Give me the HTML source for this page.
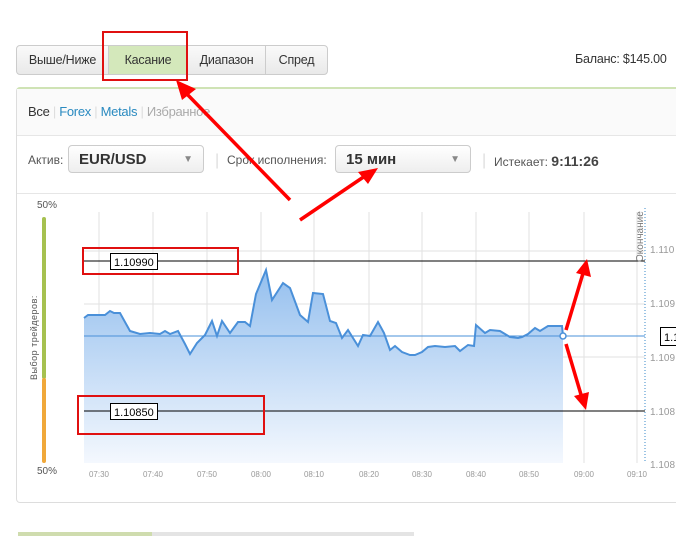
<!DOCTYPE html>
<html><head><meta charset="utf-8"><style>
body{margin:0;width:676px;height:536px;background:#fff;font-family:"Liberation Sans",sans-serif;position:relative;overflow:hidden;color:#333}
.a{position:absolute}
.tabs{left:16px;top:45px;height:28px;border:1px solid #ccc;border-radius:4px;display:flex;background:linear-gradient(#fafafa,#e9e9e9);overflow:hidden}
.tabs div{font-size:12.5px;line-height:28px;text-align:center;box-sizing:border-box;border-right:1px solid #ccc;white-space:nowrap;letter-spacing:-0.2px}
.tabs div:last-child{border-right:0}
.panel{left:16px;top:87px;width:680px;height:413px;border:1px solid #ddd;border-top:2px solid #cfe3b5;border-radius:4px}
.sel{height:28px;border:1px solid #ccc;border-radius:4px;background:linear-gradient(#fff,#eee);font-weight:bold;font-size:15px;line-height:28px;padding-left:10px;box-sizing:border-box}
.sel span{position:absolute;right:10px;font-size:10px;color:#888;font-weight:normal}
.sm{font-size:12px;color:#555}
</style></head><body>
<div class="a tabs"><div style="width:92px">Выше/Ниже</div><div style="width:79px;background:#d4e8bb">Касание</div><div style="width:78px">Диапазон</div><div style="width:61px">Спред</div></div>
<div class="a" style="left:575px;top:52px;font-size:12.5px;letter-spacing:-0.2px">Баланс: $145.00</div>
<div class="a panel"></div>
<div class="a" style="left:17px;top:89px;width:660px;height:46px;background:#fafafa;border-bottom:1px solid #e6e6e6"></div>
<div class="a" style="left:28px;top:104px;font-size:13px;letter-spacing:-0.3px">Все <span style="color:#ddd">|</span> <span style="color:#2a8ac0">Forex</span> <span style="color:#ddd">|</span> <span style="color:#2a8ac0">Metals</span> <span style="color:#ddd">|</span> <span style="color:#aaa">Избранное</span></div>
<div class="a" style="left:17px;top:193px;width:660px;border-top:1px solid #e6e6e6"></div>
<div class="a sm" style="left:28px;top:153px">Актив:</div>
<div class="a sel" style="left:68px;top:145px;width:136px">EUR/USD<span>▼</span></div>
<div class="a" style="left:215px;top:152px;color:#ddd">|</div>
<div class="a sm" style="left:227px;top:153px">Срок исполнения:</div>
<div class="a sel" style="left:335px;top:145px;width:136px">15 мин<span>▼</span></div>
<div class="a" style="left:482px;top:152px;color:#ddd">|</div>
<div class="a sm" style="left:494px;top:153px">Истекает: <b style="font-size:14px;color:#444">9:11:26</b></div>
<svg class="a" style="left:0;top:0" width="676" height="536" font-family="Liberation Sans" >
<defs><linearGradient id="g" x1="0" y1="0" x2="0" y2="1"><stop offset="0" stop-color="#94bfee"/><stop offset="1" stop-color="#f4f8fe"/></linearGradient></defs>
<text x="37" y="208" font-size="10" fill="#555">50%</text>
<text x="37" y="474" font-size="10" fill="#555">50%</text>
<rect x="42" y="217" width="4" height="162" rx="2" fill="#a6c150"/>
<rect x="42" y="378" width="4" height="85" rx="2" fill="#f0a83a"/>
<text transform="translate(37,380) rotate(-90)" font-size="9" fill="#555" letter-spacing="0.5">Выбор трейдеров:</text>
<g stroke="#e2e2e2" stroke-width="1">
<line x1="99" y1="212" x2="99" y2="463"/><line x1="153" y1="212" x2="153" y2="463"/><line x1="207" y1="212" x2="207" y2="463"/><line x1="261" y1="212" x2="261" y2="463"/><line x1="314" y1="212" x2="314" y2="463"/><line x1="369" y1="212" x2="369" y2="463"/><line x1="422" y1="212" x2="422" y2="463"/><line x1="476" y1="212" x2="476" y2="463"/><line x1="529" y1="212" x2="529" y2="463"/><line x1="584" y1="212" x2="584" y2="463"/><line x1="637" y1="212" x2="637" y2="463"/>
<line x1="84" y1="251" x2="645" y2="251"/><line x1="84" y1="304" x2="645" y2="304"/><line x1="84" y1="357" x2="645" y2="357"/>
</g>
<path d="M84,318 L88,315 105,315 110,311 114,313 120,313 130,331 140,334 150,333 160,334 165,331 170,334 178,331 185,344 190,354 197,343 205,335 212,321 217,336 222,321 230,333 238,322 245,322 250,326 256,294 266,270 272,300 283,283 290,288 300,315 308,322 313,293 323,294 330,321 336,323 342,338 348,330 358,346 363,335 370,336 378,322 384,333 390,350 395,346 402,352 410,355 415,355 422,352 428,347 435,346 445,347 455,346 460,351 468,345 474,346 476,325 485,333 490,330 500,331 510,337 518,338 522,337 528,334 535,328 540,331 548,326 562,326 563,336 L563,463 L84,463Z" fill="url(#g)"/>
<path d="M84,318 L88,315 105,315 110,311 114,313 120,313 130,331 140,334 150,333 160,334 165,331 170,334 178,331 185,344 190,354 197,343 205,335 212,321 217,336 222,321 230,333 238,322 245,322 250,326 256,294 266,270 272,300 283,283 290,288 300,315 308,322 313,293 323,294 330,321 336,323 342,338 348,330 358,346 363,335 370,336 378,322 384,333 390,350 395,346 402,352 410,355 415,355 422,352 428,347 435,346 445,347 455,346 460,351 468,345 474,346 476,325 485,333 490,330 500,331 510,337 518,338 522,337 528,334 535,328 540,331 548,326 562,326 563,336" fill="none" stroke="#4a90d9" stroke-width="2"/>
<line x1="84" y1="336" x2="645" y2="336" stroke="#4a90d9"/>
<circle cx="563" cy="336" r="3" fill="#fff" stroke="#4a90d9" stroke-width="1.5"/>
<line x1="84" y1="261" x2="645" y2="261" stroke="#000"/>
<line x1="84" y1="411" x2="645" y2="411" stroke="#000"/>
<rect x="110.5" y="253.5" width="47" height="16" fill="#fff" stroke="#000"/><text x="114" y="266" font-size="11">1.10990</text>
<rect x="110.5" y="403.5" width="47" height="16" fill="#fff" stroke="#000"/><text x="114" y="416" font-size="11">1.10850</text>
<rect x="660.5" y="327.5" width="20" height="18" fill="#fff" stroke="#000"/><text x="664" y="341" font-size="11">1.1</text>
<line x1="645" y1="208" x2="645" y2="463" stroke="#3a8ac8" stroke-dasharray="1,2"/>
<text transform="translate(643,262) rotate(-90)" font-size="10" fill="#777">Окончание</text>
<g font-size="10" fill="#999"><text x="650" y="253">1.110</text><text x="650" y="307">1.109</text><text x="650" y="361">1.109</text><text x="650" y="415">1.108</text><text x="650" y="468">1.108</text></g>
<g font-size="8" fill="#999" text-anchor="middle"><text x="99" y="477">07:30</text><text x="153" y="477">07:40</text><text x="207" y="477">07:50</text><text x="261" y="477">08:00</text><text x="314" y="477">08:10</text><text x="369" y="477">08:20</text><text x="422" y="477">08:30</text><text x="476" y="477">08:40</text><text x="529" y="477">08:50</text><text x="584" y="477">09:00</text><text x="637" y="477">09:10</text></g>
<g fill="none" stroke="#e01010" stroke-width="2"><rect x="103" y="32" width="84" height="48"/><rect x="83" y="248" width="155" height="26"/><rect x="78" y="396" width="186" height="38"/></g>
<g stroke="#f00" stroke-width="3.5" fill="#f00">
<line x1="290" y1="200" x2="185" y2="92"/><polygon points="176,80 196,89 182,100" stroke="none"/>
<line x1="300" y1="220" x2="365" y2="176"/><polygon points="378,168 368,184 358,172" stroke="none"/>
<line x1="566" y1="330" x2="584" y2="270"/><polygon points="587,259 591,277 576,273" stroke="none"/>
<line x1="566" y1="344" x2="582" y2="398"/><polygon points="586,410 574,396 589,392" stroke="none"/>
</g>
<rect x="18" y="532" width="396" height="4" fill="#e4e4e4"/><rect x="18" y="532" width="134" height="4" fill="#cfdcae"/>
</svg>
</body></html>
